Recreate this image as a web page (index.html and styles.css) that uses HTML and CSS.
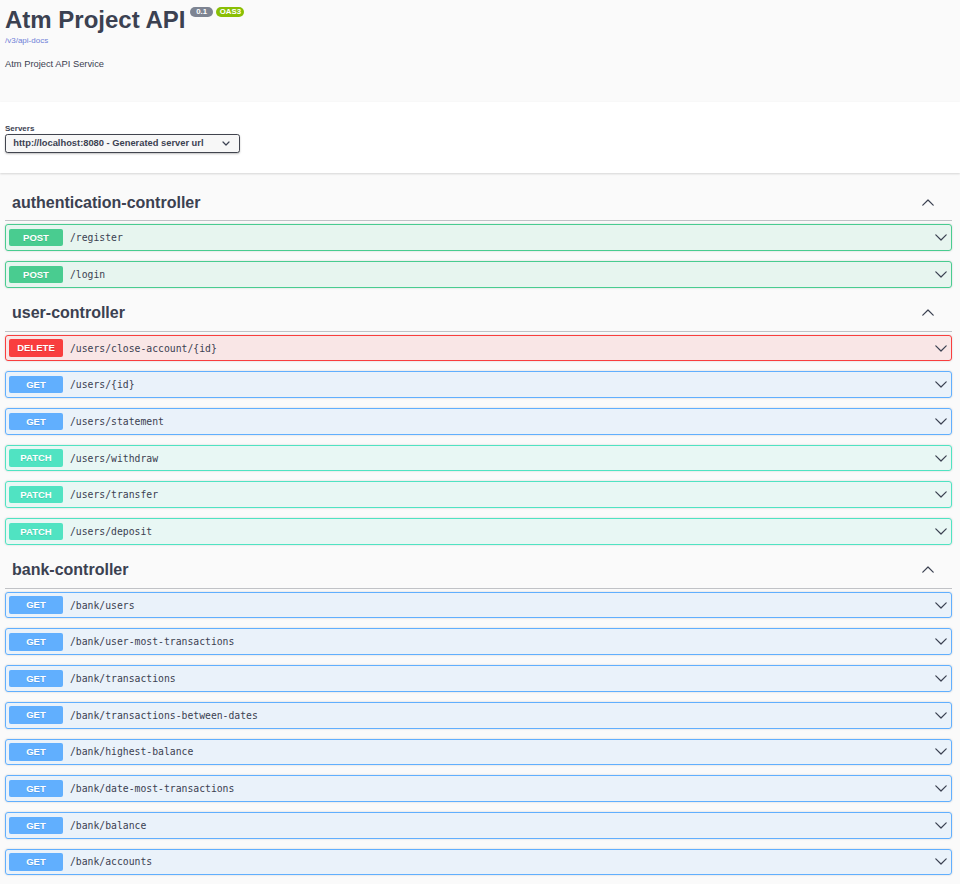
FILE: index.html
```html
<!DOCTYPE html>
<html lang="en">
<head>
<meta charset="utf-8">
<title>Atm Project API</title>
<link rel="stylesheet" href="styles.css">
</head>
<body>
<header class="info">
  <h1 class="title">
    <span class="title-text">Atm Project API</span>
    <span class="badge badge-version">0.1</span>
    <span class="badge badge-oas">OAS3</span>
  </h1>
  <a class="base-url" href="#">/v3/api-docs</a>
  <p class="description">Atm Project API Service</p>
</header>

<section class="scheme-container">
  <div class="servers-label">Servers</div>
  <div class="servers-select">
    <span class="servers-value">http://localhost:8080 - Generated server url</span>
    <svg class="select-arrow" viewBox="0 0 8 5" width="8" height="5"><polyline points="1,1 4,4 7,1" fill="none" stroke="#3b4151" stroke-width="1.2" stroke-linecap="round" stroke-linejoin="round"/></svg>
  </div>
</section>

<main class="wrapper">
  <section class="tag-section">
    <h2 class="tag"><span class="tag-name">authentication-controller</span><svg class="tag-arrow" viewBox="0 0 12 7" width="12" height="7"><polyline points="0.8,6.2 6,1 11.2,6.2" fill="none" stroke="#3b4151" stroke-width="1.2" stroke-linecap="round" stroke-linejoin="round"/></svg></h2>
    <div class="op op-post"><span class="method">POST</span><span class="path">/register</span><svg class="op-arrow" viewBox="0 0 12 7" width="12" height="7"><polyline points="0.8,0.8 6,6 11.2,0.8" fill="none" stroke="#3b4151" stroke-width="1.2" stroke-linecap="round" stroke-linejoin="round"/></svg></div>
    <div class="op op-post"><span class="method">POST</span><span class="path">/login</span><svg class="op-arrow" viewBox="0 0 12 7" width="12" height="7"><polyline points="0.8,0.8 6,6 11.2,0.8" fill="none" stroke="#3b4151" stroke-width="1.2" stroke-linecap="round" stroke-linejoin="round"/></svg></div>
  </section>

  <section class="tag-section">
    <h2 class="tag"><span class="tag-name">user-controller</span><svg class="tag-arrow" viewBox="0 0 12 7" width="12" height="7"><polyline points="0.8,6.2 6,1 11.2,6.2" fill="none" stroke="#3b4151" stroke-width="1.2" stroke-linecap="round" stroke-linejoin="round"/></svg></h2>
    <div class="op op-delete"><span class="method">DELETE</span><span class="path">/users/close-account/{id}</span><svg class="op-arrow" viewBox="0 0 12 7" width="12" height="7"><polyline points="0.8,0.8 6,6 11.2,0.8" fill="none" stroke="#3b4151" stroke-width="1.2" stroke-linecap="round" stroke-linejoin="round"/></svg></div>
    <div class="op op-get"><span class="method">GET</span><span class="path">/users/{id}</span><svg class="op-arrow" viewBox="0 0 12 7" width="12" height="7"><polyline points="0.8,0.8 6,6 11.2,0.8" fill="none" stroke="#3b4151" stroke-width="1.2" stroke-linecap="round" stroke-linejoin="round"/></svg></div>
    <div class="op op-get"><span class="method">GET</span><span class="path">/users/statement</span><svg class="op-arrow" viewBox="0 0 12 7" width="12" height="7"><polyline points="0.8,0.8 6,6 11.2,0.8" fill="none" stroke="#3b4151" stroke-width="1.2" stroke-linecap="round" stroke-linejoin="round"/></svg></div>
    <div class="op op-patch"><span class="method">PATCH</span><span class="path">/users/withdraw</span><svg class="op-arrow" viewBox="0 0 12 7" width="12" height="7"><polyline points="0.8,0.8 6,6 11.2,0.8" fill="none" stroke="#3b4151" stroke-width="1.2" stroke-linecap="round" stroke-linejoin="round"/></svg></div>
    <div class="op op-patch"><span class="method">PATCH</span><span class="path">/users/transfer</span><svg class="op-arrow" viewBox="0 0 12 7" width="12" height="7"><polyline points="0.8,0.8 6,6 11.2,0.8" fill="none" stroke="#3b4151" stroke-width="1.2" stroke-linecap="round" stroke-linejoin="round"/></svg></div>
    <div class="op op-patch"><span class="method">PATCH</span><span class="path">/users/deposit</span><svg class="op-arrow" viewBox="0 0 12 7" width="12" height="7"><polyline points="0.8,0.8 6,6 11.2,0.8" fill="none" stroke="#3b4151" stroke-width="1.2" stroke-linecap="round" stroke-linejoin="round"/></svg></div>
  </section>

  <section class="tag-section">
    <h2 class="tag"><span class="tag-name">bank-controller</span><svg class="tag-arrow" viewBox="0 0 12 7" width="12" height="7"><polyline points="0.8,6.2 6,1 11.2,6.2" fill="none" stroke="#3b4151" stroke-width="1.2" stroke-linecap="round" stroke-linejoin="round"/></svg></h2>
    <div class="op op-get"><span class="method">GET</span><span class="path">/bank/users</span><svg class="op-arrow" viewBox="0 0 12 7" width="12" height="7"><polyline points="0.8,0.8 6,6 11.2,0.8" fill="none" stroke="#3b4151" stroke-width="1.2" stroke-linecap="round" stroke-linejoin="round"/></svg></div>
    <div class="op op-get"><span class="method">GET</span><span class="path">/bank/user-most-transactions</span><svg class="op-arrow" viewBox="0 0 12 7" width="12" height="7"><polyline points="0.8,0.8 6,6 11.2,0.8" fill="none" stroke="#3b4151" stroke-width="1.2" stroke-linecap="round" stroke-linejoin="round"/></svg></div>
    <div class="op op-get"><span class="method">GET</span><span class="path">/bank/transactions</span><svg class="op-arrow" viewBox="0 0 12 7" width="12" height="7"><polyline points="0.8,0.8 6,6 11.2,0.8" fill="none" stroke="#3b4151" stroke-width="1.2" stroke-linecap="round" stroke-linejoin="round"/></svg></div>
    <div class="op op-get"><span class="method">GET</span><span class="path">/bank/transactions-between-dates</span><svg class="op-arrow" viewBox="0 0 12 7" width="12" height="7"><polyline points="0.8,0.8 6,6 11.2,0.8" fill="none" stroke="#3b4151" stroke-width="1.2" stroke-linecap="round" stroke-linejoin="round"/></svg></div>
    <div class="op op-get"><span class="method">GET</span><span class="path">/bank/highest-balance</span><svg class="op-arrow" viewBox="0 0 12 7" width="12" height="7"><polyline points="0.8,0.8 6,6 11.2,0.8" fill="none" stroke="#3b4151" stroke-width="1.2" stroke-linecap="round" stroke-linejoin="round"/></svg></div>
    <div class="op op-get"><span class="method">GET</span><span class="path">/bank/date-most-transactions</span><svg class="op-arrow" viewBox="0 0 12 7" width="12" height="7"><polyline points="0.8,0.8 6,6 11.2,0.8" fill="none" stroke="#3b4151" stroke-width="1.2" stroke-linecap="round" stroke-linejoin="round"/></svg></div>
    <div class="op op-get"><span class="method">GET</span><span class="path">/bank/balance</span><svg class="op-arrow" viewBox="0 0 12 7" width="12" height="7"><polyline points="0.8,0.8 6,6 11.2,0.8" fill="none" stroke="#3b4151" stroke-width="1.2" stroke-linecap="round" stroke-linejoin="round"/></svg></div>
    <div class="op op-get"><span class="method">GET</span><span class="path">/bank/accounts</span><svg class="op-arrow" viewBox="0 0 12 7" width="12" height="7"><polyline points="0.8,0.8 6,6 11.2,0.8" fill="none" stroke="#3b4151" stroke-width="1.2" stroke-linecap="round" stroke-linejoin="round"/></svg></div>
  </section>
</main>
</body>
</html>
```

FILE: styles.css
```css
html, body {
  margin: 0;
  padding: 0;
  background: #fafafa;
}

body {
  font-family: "Liberation Sans", Arial, sans-serif;
  color: #3b4151;
}

/* ---------- info header ---------- */
.info {
  padding: 6px 5px 32px;
}

.title {
  display: flex;
  align-items: flex-start;
  margin: 0;
  font-size: 24px;
  line-height: 28px;
  font-weight: bold;
  color: #3b4151;
}

.title-text {
  margin-right: 5px;
}

.badge {
  margin-top: 1.3px;
  margin-right: 3.6px;
  height: 10px;
  line-height: 10px;
  padding: 0 3.3px;
  border-radius: 57px;
  font-size: 7.8px;
  font-weight: bold;
  color: #fff;
  box-sizing: border-box;
  text-align: center;
}

.badge-version {
  background: #7d8492;
  min-width: 22.4px;
}

.badge-oas {
  background: #89bf04;
  min-width: 26px;
}

.base-url {
  display: block;
  margin-top: 2px;
  font-size: 8px;
  line-height: 10px;
  color: #6f7fd8;
  text-decoration: none;
}

.description {
  margin: 12px 0 0;
  font-size: 9.33px;
  line-height: 12px;
}

/* ---------- servers ---------- */
.scheme-container {
  background: #fff;
  box-shadow: 0 1px 2px 0 rgba(0, 0, 0, 0.15);
  padding: 22px 5px 20px;
}

.servers-label {
  font-size: 8px;
  line-height: 10px;
  font-weight: bold;
}

.servers-select {
  display: flex;
  align-items: center;
  justify-content: space-between;
  width: 235px;
  height: 18.7px;
  box-sizing: border-box;
  border: 1px solid #41444e;
  border-radius: 2.7px;
  padding: 0 9.5px 0 7.3px;
  background: #f7f7f7;
  box-shadow: 0 1px 2px rgba(0, 0, 0, 0.25);
  font-size: 9.33px;
  font-weight: bold;
  color: #3b4151;
}

.select-arrow {
  display: block;
}

/* ---------- operations ---------- */
.wrapper {
  display: block;
  margin-top: 14.6px;
  padding: 0 8px 0 5px;
}

.tag {
  display: flex;
  align-items: center;
  height: 34px;
  box-sizing: border-box;
  margin: 0 0 3px;
  padding: 5px 18px 8px 7px;
  border-bottom: 1px solid rgba(59, 65, 81, 0.3);
  font-size: 16px;
  line-height: 20px;
  font-weight: bold;
  color: #3b4151;
}

.tag-name {
  flex: 1;
  padding-top: 1px;
}

.tag-arrow {
  display: block;
}

.op {
  display: flex;
  align-items: center;
  height: 26.7px;
  box-sizing: border-box;
  margin-bottom: 10px;
  padding: 0 4px 0 3px;
  border: 1px solid;
  border-radius: 3px;
  box-shadow: 0 0 2px rgba(0, 0, 0, 0.19);
}

.method {
  width: 54px;
  height: 17.4px;
  line-height: 17.4px;
  border-radius: 2px;
  text-align: center;
  font-size: 9.5px;
  font-weight: bold;
  color: #fff;
  text-shadow: 0 1px 0 rgba(0, 0, 0, 0.1);
}

.path {
  flex: 1;
  margin-left: 7px;
  font-family: "DejaVu Sans Mono", "Liberation Mono", monospace;
  font-size: 9.75px;
  color: #3b4151;
}

.op-arrow {
  display: block;
}

.op-post {
  border-color: #49cc90;
  background: rgba(73, 204, 144, 0.1);
}
.op-post .method { background: #49cc90; }

.op-get {
  border-color: #61affe;
  background: rgba(97, 175, 254, 0.1);
}
.op-get .method { background: #61affe; }

.op-delete {
  border-color: #f93e3e;
  background: rgba(249, 62, 62, 0.1);
}
.op-delete .method { background: #f93e3e; }

.op-patch {
  border-color: #50e3c2;
  background: rgba(80, 227, 194, 0.1);
}
.op-patch .method { background: #50e3c2; }
```
